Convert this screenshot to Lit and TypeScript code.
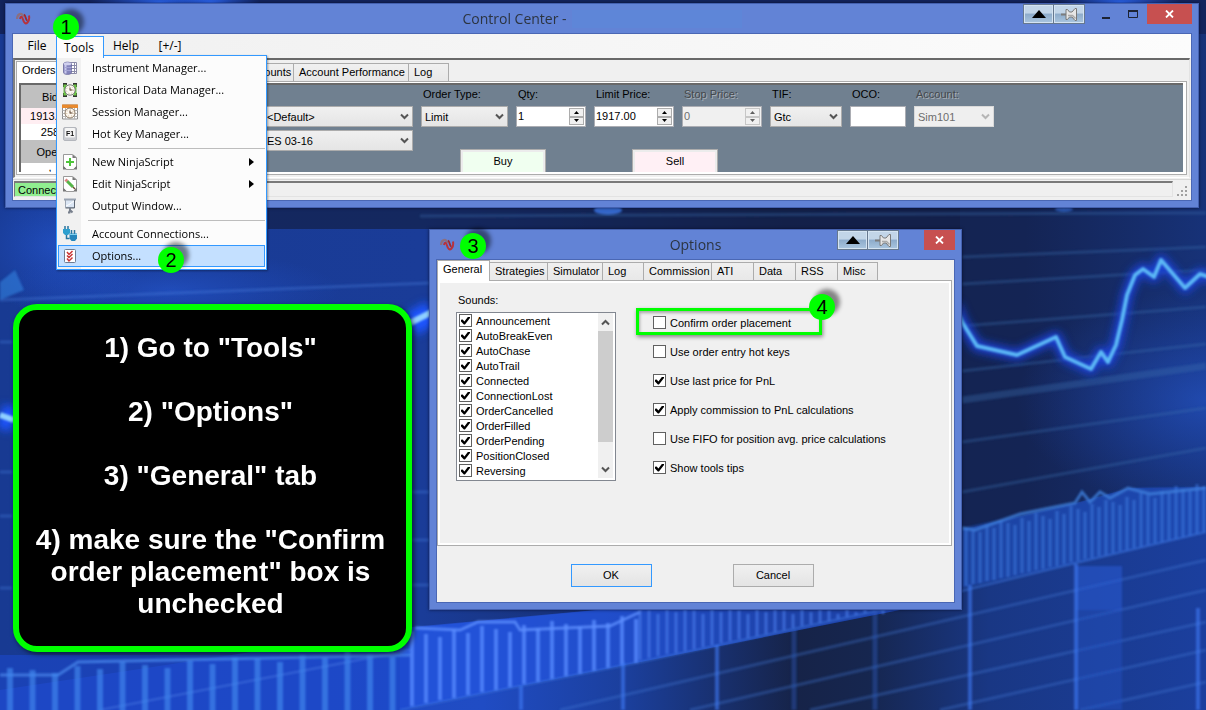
import { LitElement, html, svg, css, nothing } from "lit";
import { customElement, property } from "lit/decorators.js";
import { classMap } from "lit/directives/class-map.js";

const pinGlyph = svg`
  <path d="M1 8.5h6" stroke="#7c7c7c" stroke-width="2"/>
  <path d="M6 3.500h1.500l2 2.500h2.500l3-3.500h1.500v12H15l-3-3.500H9.500l-2 2.500H6z" fill="#e6e6e6" stroke="#7a7a7a" stroke-width="1"/>
  <path d="M8 9.500h4.500l3 3" stroke="#a9a9a9" stroke-width="1.500" fill="none"/>`;

/** Numbered green disc that points at a step of the walkthrough. */
@customElement("step-badge")
export class StepBadge extends LitElement {
  static styles = css`
    :host {
      position: absolute;
      z-index: 5;
      display: grid;
      place-items: center;
      width: 26px;
      height: 26px;
      border-radius: 50%;
      background: #00ff00;
      color: #000;
      font: 20px/26px "Liberation Sans", Arial, sans-serif;
      box-shadow: 5px -5px 4px rgba(0, 0, 0, 0.45);
    }
  `;
  render() {
    return html`<slot></slot>`;
  }
}

/** Window chrome: caption, caption buttons and a client area. */
@customElement("desktop-window")
export class DesktopWindow extends LitElement {
  @property() caption = "";
  @property({ type: Boolean }) resizable = false;
  @property({ type: Boolean }) redacted = false;

  static styles = css`
    :host {
      display: flex;
      flex-direction: column;
      box-sizing: border-box;
      border: 1px solid #4461b0;
      background: #6283d6;
      padding: 0 6px 6px;
      box-shadow: 0 0 3px rgba(0, 0, 20, 0.6);
    }
    .caption {
      display: grid;
      grid-template-columns: 1fr auto 1fr;
      height: 29px;
      align-items: start;
    }
    .logo {
      margin: 8px 0 0 4px;
    }
    .title {
      display: flex;
      margin: 0;
      font: 14px/30px "Open Sans", "Noto Sans", sans-serif;
      color: #2c3440;
      white-space: pre;
    }
    .blank {
      width: 170px;
      height: 18px;
      margin: 6px 0 0 5px;
      background: #5e86d8;
    }
    .controls {
      display: flex;
      justify-content: flex-end;
    }
    button {
      display: grid;
      place-items: center;
      padding: 0;
      border: 0;
      background: none;
      height: 20px;
      width: 27px;
      border-radius: 0;
    }
    .extra {
      width: 31px;
      box-sizing: border-box;
      border: 1px solid #66788f;
      box-shadow: inset 0 0 0 1px #d5e4f2;
      background: linear-gradient(#c2d5e8 0 45%, #8dabca 50%, #aac6e0);
    }
    .extra + .extra {
      border-left: 0;
    }
    .extra:nth-of-type(2) {
      margin-right: 8px;
    }
    .close {
      width: 31px;
      background: #c75050;
    }
    .wide {
      width: 45px;
    }
    .gap {
      width: 17px;
    }
    .client {
      flex: 1;
      display: flex;
      flex-direction: column;
      border: 1px solid #4a67b4;
      background: #f0f0f0;
      min-height: 0;
    }
  `;

  render() {
    return html`
      <header class="caption">
        <svg class="logo" width="16" height="13" viewBox="0 0 16 13" fill="none">
          <path d="M1 7C1.500 1 6 .5 7.500 5" stroke="#8b6f80" stroke-width="2.200" />
          <path d="M4 7c.5-3 2-3 3 .5s2.500 5 4.500 3 2-4 1.500-7" stroke="#b8323c" stroke-width="2" />
          <path d="M8 2.500c2 1 1.500 6 3.500 6" stroke="#a3262c" stroke-width="1.800" />
        </svg>
        <h1 class="title">${this.caption}${this.redacted ? html`<span class="blank"></span>` : nothing}</h1>
        <div class="controls">
          <button class="extra" aria-label="Roll up">
            <svg width="16" height="8" viewBox="0 0 16 8"><path d="M1 8 8 0l7 8z" fill="#000" /></svg>
          </button>
          <button class="extra" aria-label="Pin">
            <svg width="18" height="16" viewBox="0 0 18 16" fill="none">${pinGlyph}</svg>
          </button>
          ${this.resizable
            ? html`
                <button aria-label="Minimize">
                  <svg width="11" height="12" viewBox="0 0 11 12"><path d="M1 9h8v2H1z" fill="#1c2333" /></svg>
                </button>
                <button aria-label="Maximize">
                  <svg width="11" height="9" viewBox="0 0 11 9" fill="none">
                    <path d="M.5 1.500h9v6h-9z" stroke="#1c2333" /><path d="M0 1h10" stroke="#1c2333" stroke-width="2" />
                  </svg>
                </button>
              `
            : html`<span class="gap"></span>`}
          <button class=${classMap({ close: true, wide: this.resizable })} aria-label="Close">
            <svg width="9" height="8" viewBox="0 0 9 8"><path d="m1 0.500 7 7M8 .5l-7 7" stroke="#fff" stroke-width="1.800" /></svg>
          </button>
        </div>
      </header>
      <div class="client"><slot></slot></div>
    `;
  }
}

const icons: Record<string, unknown> = {
  instrument: svg`
    <path d="M8.500 2.500h6v11h-6z" fill="#fff" stroke="#8a8aa8"/>
    <path d="M8.500 5.500h6M8.500 8.500h6M8.500 11.500h6M12.500 2.500v11" stroke="#8a8aa8"/>
    <path d="M1.500 4c0-2.500 8-2.500 8 0v8.500c0 2.500-8 2.500-8 0z" fill="#8484bc" stroke="#6a6a9c" stroke-width=".8"/>
    <path d="M3.500 4v9.500" stroke="#c8c8ec" stroke-width="2"/>
    <path d="M2 7.500h7.500M2 10.500h7.500" stroke="#a4a4d4"/>
    <ellipse cx="5.500" cy="3.800" rx="3.800" ry="1.500" fill="#d0d0ee"/>`,
  historical: svg`
    <path d="M2 5V2h3M11 2h3v3M2 11v3h3M11 14h3v-3" fill="none" stroke="#333" stroke-width="2"/>
    <path d="M3 2.500v11M13 2.500v11" stroke="#6cc644" stroke-width="3"/>
    <circle cx="8" cy="8" r="5.200" fill="#fdfaf4" stroke="#777"/>
    <circle cx="8" cy="8" r="3.500" stroke="#c9b89c" stroke-dasharray="1 2"/>
    <path d="M8 8.500V5.500M8 8h2.500" stroke="#5a3e28"/>`,
  session: svg`
    <path d="M.5 1h15v14H.5z" fill="#fff" stroke="#8d8d8d"/>
    <path d="M.5 6.500h15M.5 9.500h15M.5 12.500h15M3.500 4v11M12.500 4v11" stroke="#b5b5b5"/>
    <path d="M0 .5h16V4H0z" fill="#e88a2e"/>
    <circle cx="8" cy="9" r="5" fill="#fdf8f0" stroke="#8a7762"/>
    <circle cx="8" cy="9" r="3.300" stroke="#d0b48c" stroke-dasharray="1 2"/>
    <path d="M8 9.500V6.500M8 9h2.500" stroke="#5a3e28"/>`,
  hotkey: svg`
    <rect x="1.500" y="1.500" width="13" height="13" rx="1.500" fill="#c9cbd0" stroke="#b3b6bc"/>
    <rect x="3" y="2" width="10" height="9.500" rx="1" fill="#f5f5f5"/>
    <text x="8" y="9.500" font-family="Liberation Sans, sans-serif" font-weight="700" font-size="7" text-anchor="middle" fill="#111">F1</text>`,
  create: svg`
    <path d="M1.500.5h9l4 3v9l-3 3h-7l-3-3z" fill="#fff" stroke="#9a9a9a"/>
    <path d="M1 15.500h4L1 11.500zM15 15.500h-4l4-4zM10.500.5l4 3.500h-4z" fill="#777"/>
    <path d="M8 4v8M4 8h8" stroke="#4ec53a" stroke-width="2"/>`,
  edit: svg`
    <path d="M1.500.5h9l4 3v9l-3 3h-7l-3-3z" fill="#fff" stroke="#9a9a9a"/>
    <path d="M1 15.500h4L1 11.500zM15 15.500h-4l4-4zM10.500.5l4 3.500h-4z" fill="#777"/>
    <path d="m5 5 6 6" stroke="#55b548" stroke-width="3"/>
    <path d="m3.500 3.500 1.700 1.700" stroke="#d98080" stroke-width="3"/>
    <path d="m11 11 2 2" stroke="#6b4a2a" stroke-width="1.500"/>`,
  output: svg`
    <path d="M3.500 1.500h9v8h-9z" fill="#dbe6f4" stroke="#9aa4b2"/>
    <path d="M2 1.500h12" stroke="#9aa4b2" stroke-width="2"/>
    <path d="M12.500 2v8h-9" stroke="#5f6875"/>
    <path d="M4 8c3-1 5-3 8-5" stroke="#fff"/>
    <path d="M8 10v2M6 14.500h1.500L8 12l2.500 2.500" stroke="#777f8c" stroke-width="2"/>`,
  connections: svg`
    <path d="M3 0v4M6 0v4" stroke="#2876a0" stroke-width="1.500"/>
    <path d="M1 3h7v4L6 9H3L1 7z" fill="#2d9fce"/><path d="M4.500 9v3.500h3" stroke="#2876a0" stroke-width="1.500" fill="none"/>
    <path d="M9.500 4v4M12.500 4v4" stroke="#2876a0" stroke-width="1.500"/>
    <path d="M7.500 7.500H15v5l-2 2.500H9.500l-2-2.500z" fill="#2585bb"/><path d="M8 8.500h7" stroke="#7fd0ee"/>`,
  options: svg`
    <rect x="2.500" y="1.500" width="11" height="13" rx="1" fill="#fff" stroke="#6d7c92"/>
    <path d="m5 4 2 2.500L10.500 3M5 10.500 7 13l3.500-3.500M5 7.500 7 9.500 10.500 6" stroke="#c93636" stroke-width="1.500" fill="none"/>`,
};

type MenuEntry = { icon: string; label: string; sub?: boolean; active?: boolean } | null;

const toolsMenu: MenuEntry[] = [
  { icon: "instrument", label: "Instrument Manager..." },
  { icon: "historical", label: "Historical Data Manager..." },
  { icon: "session", label: "Session Manager..." },
  { icon: "hotkey", label: "Hot Key Manager..." },
  null,
  { icon: "create", label: "New NinjaScript", sub: true },
  { icon: "edit", label: "Edit NinjaScript", sub: true },
  { icon: "output", label: "Output Window..." },
  null,
  { icon: "connections", label: "Account Connections..." },
  { icon: "options", label: "Options...", active: true },
];

const sounds = [
  "Announcement", "AutoBreakEven", "AutoChase", "AutoTrail", "Connected", "ConnectionLost",
  "OrderCancelled", "OrderFilled", "OrderPending", "PositionClosed", "Reversing",
];

const settings: [string, boolean][] = [
  ["Confirm order placement", false],
  ["Use order entry hot keys", false],
  ["Use last price for PnL", true],
  ["Apply commission to PnL calculations", true],
  ["Use FIFO for position avg. price calculations", false],
  ["Show tools tips", true],
];

const optionTabs: [string, number][] = [
  ["General", 53], ["Strategies", 58], ["Simulator", 55], ["Log", 41], ["Commission", 68],
  ["ATI", 42], ["Data", 42], ["RSS", 42], ["Misc", 40],
];

const instructions = [
  '1) Go to "Tools"',
  '2) "Options"',
  '3) "General" tab',
  '4) make sure the "Confirm order placement" box is unchecked',
];

/** Vertical bars of the wallpaper chart, between an upper and a lower edge. */
function bars(x0: number, x1: number, step: number, top: (x: number) => number, bottom: (x: number) => number) {
  let d = "";
  for (let x = x0, i = 0; x < x1; x += step, i++) {
    d += `M${x} ${Math.round(top(x) + ((i * 7) % 5) * 2)}V${Math.round(bottom(x))}`;
  }
  return d;
}

const ray = (x0: number, y0: number, x1: number, y1: number) => (x: number) =>
  y0 + ((x - x0) * (y1 - y0)) / (x1 - x0);

const priceLine =
  "M955 305 962 322 977 346 1017 355 1056 337 1065 357 1091 369 1101 352 1108 362 1116 345 1122 320 1127 295 1135 275 1143 269 1154 277 1161 260 1185 288 1200 274 1212 278";

const wallpaper = html`
  <svg class="wallpaper" viewBox="0 0 1206 710" preserveAspectRatio="xMidYMid slice" aria-hidden="true">
    <defs>
      <linearGradient id="base" x1="0" x2="1">
        <stop offset="0" stop-color="#183a92" />
        <stop offset=".35" stop-color="#1a3c98" />
        <stop offset=".65" stop-color="#14244f" />
        <stop offset=".85" stop-color="#142454" />
        <stop offset="1" stop-color="#173278" />
      </linearGradient>
      <linearGradient id="floor" x1="0" x2="1">
        <stop offset="0" stop-color="#1f46ba" />
        <stop offset=".4" stop-color="#204cc4" />
        <stop offset=".52" stop-color="#1b3f9c" />
        <stop offset=".66" stop-color="#162348" />
        <stop offset=".72" stop-color="#16264f" />
        <stop offset=".82" stop-color="#193784" />
        <stop offset="1" stop-color="#1b3f9e" />
      </linearGradient>
      <radialGradient id="spot">
        <stop offset="0" stop-color="#2c66f0" />
        <stop offset="1" stop-color="#2458e0" stop-opacity="0" />
      </radialGradient>
      <filter id="soft" x="-10%" y="-10%" width="120%" height="120%"><feGaussianBlur stdDeviation="1.2" /></filter>
      <filter id="glow" x="-20%" y="-50%" width="140%" height="200%"><feGaussianBlur stdDeviation="4" /></filter>
    </defs>
    <rect width="1206" height="710" fill="url(#base)" />
    <rect width="1206" height="34" fill="#13245c" />
    <ellipse cx="160" cy="2" rx="70" ry="9" fill="url(#spot)" />
    <ellipse cx="210" cy="2" rx="50" ry="9" fill="url(#spot)" />
    <ellipse cx="1120" cy="2" rx="60" ry="9" fill="url(#spot)" />
    <ellipse cx="1206" cy="400" rx="190" ry="110" fill="url(#spot)" opacity=".45" />
    <ellipse cx="60" cy="245" rx="90" ry="70" fill="url(#spot)" opacity=".45" />
    <ellipse cx="170" cy="290" rx="170" ry="40" fill="url(#spot)" opacity=".4" />
    <path d="M268 208H960V229H268z" fill="#121f47" opacity=".7" />
    <ellipse cx="608" cy="210" rx="14" ry="5" fill="#3d78e8" filter="url(#soft)" opacity=".8" />
    <ellipse cx="1064" cy="209" rx="9" ry="3" fill="#3d78e8" filter="url(#soft)" opacity=".6" />
    <path d="M0 690 120 672 410 628 640 606 970 528 1080 502 1130 488 1206 487V710H0z" fill="url(#floor)" />
    <path d="M400 628 640 606 900 560V610L400 710z" fill="#2456e6" opacity=".6" />
    <path d="M0 655H410V710H0z" fill="#1d48cc" opacity=".6" />
    <g filter="url(#soft)" fill="none">
      <path d="M962 257 1206 247M962 284 1206 270M962 326 1206 307M962 371 1206 344M962 442 1206 408" stroke="#3a6fae" stroke-width="3" opacity=".35" />
      <path d="M962 400 1206 366" stroke="#3a6fae" stroke-width="7" opacity=".35" />
      <path d="M962 492 1206 448M420 216 1206 213" stroke="#3a6fae" stroke-width="3" opacity=".35" />
      <path d="M560 710 1206 560M690 710 1206 590M810 710 1206 622M940 710 1206 650M1080 710 1206 682" stroke="#4379d8" stroke-width="3" opacity=".35" />
      <path d="M0 300 430 283M0 342H12M0 472H12M0 516H12M412 492H430M412 540H430M412 585H430M0 588H12" stroke="#4a7ee0" stroke-width="3" opacity=".35" />
      <path d="M0 282 15 270 24 290 0 300z" fill="#3482e0" opacity=".6" />
      <path d="M0 675H58L78 662 410 655" stroke="#4b8cf0" stroke-width="3" opacity=".7" />
      <path d="M100 710 410 650" stroke="#5a8df0" stroke-width="2" opacity=".4" />
      <path d=${bars(10, 410, 22.500, ray(0, 668, 410, 648), () => 714)} stroke="#4088ee" stroke-width="6" opacity=".65" />
      <path d=${bars(412, 640, 14, ray(400, 632, 640, 615), ray(400, 708, 640, 662))} stroke="#5a8cff" stroke-width="4" opacity=".75" />
      <path d=${bars(640, 900, 9, () => 606, ray(640, 660, 900, 606))} stroke="#4d80f0" stroke-width="3" opacity=".6" />
      <path d="M415 628 460 630 478 622 515 622 520 630 610 626 640 612" stroke="#5f90ff" stroke-width="3" opacity=".8" />
      <path d="M962 528 1080 502 1130 488 1206 487V532L1080 562 962 588z" fill="#1d50c0" opacity=".55" />
      <path d=${bars(966, 1206, 7, ray(966, 527, 1206, 480), ray(966, 586, 1206, 532))} stroke="#3f7eea" stroke-width="3" opacity=".5" />
      <path d="M962 528 975 530 1020 514 1075 503 1082 492 1090 502 1100 492 1110 498 1128 488 1150 494 1206 488" stroke="#4080dc" stroke-width="3" opacity=".8" />
      <path d="M400 710 640 662 900 606 1080 562 1206 532" stroke="#3c74e0" stroke-width="2" opacity=".6" />
      <path d="M1076 566h46v44h-46z" fill="#2a5cdc" opacity=".5" />
      <path d="M1076 610h46v100h-46z" fill="#2453c8" opacity=".4" />
      <path d="M521 686V710M623 662V710M717 645V710M970 585V710M1076 564V710M1198 608V710" stroke="#3f7bf5" stroke-width="4" opacity=".6" />
      <path d="M794 628V710M875 612V710" stroke="#2e5cc0" stroke-width="5" opacity=".4" />
    </g>
    <path d=${priceLine} fill="none" stroke="#1a42d8" stroke-width="11" stroke-linejoin="round" filter="url(#glow)" />
    <path d=${priceLine} fill="none" stroke="#5cb8f6" stroke-width="4" stroke-linejoin="round" filter="url(#soft)" />
    <path d="M0 416 14 420M410 325 432 312" stroke="#1c55ff" stroke-width="24" filter="url(#glow)" />
    <path d="M0 415 14 420M410 323 432 312" stroke="#8fd0ff" stroke-width="6" filter="url(#soft)" />
  </svg>
`;

@customElement("app-root")
export class AppRoot extends LitElement {
  static styles = css`
    :host {
      display: block;
      position: relative;
      height: 100vh;
      overflow: hidden;
      background: #16295f;
      color: #000;
      font: 11px/14px "Liberation Sans", Arial, sans-serif;
    }
    button,
    input,
    select {
      box-sizing: border-box;
      font: inherit;
      color: inherit;
      margin: 0;
      border-radius: 0;
    }
    .wallpaper {
      position: absolute;
      inset: 0;
      width: 100%;
      height: 100%;
    }

    /* control center */
    .center {
      position: absolute;
      left: 5px;
      right: 7px;
      top: 3px;
    }
    .menubar {
      display: flex;
      height: 24px;
      background: linear-gradient(90deg, #f0f0f0, #fcfcfc);
      font: 12px/22px "Open Sans", "Noto Sans", sans-serif;
      padding-left: 5px;
    }
    .menubar button {
      display: block;
      width: 44px;
      height: 24px;
      padding: 0;
      border: 1px solid transparent;
      background: none;
    }
    .menubar .file {
      width: 38px;
    }
    .menu-host {
      position: relative;
    }
    .menu-host .open {
      width: 48px;
      height: 22px;
      margin-top: 2px;
      padding-right: 2px;
      line-height: 18px;
      border: 1px solid #3399ff;
      border-bottom: 0;
      background: #fcfcfc;
      position: relative;
      z-index: 3;
    }
    .menu {
      position: absolute;
      z-index: 2;
      top: 21px;
      left: 0;
      box-sizing: border-box;
      width: 211px;
      margin: 0;
      padding: 1px 1px 2px;
      border: 1px solid #3399ff;
      list-style: none;
      background: linear-gradient(90deg, #f1f1f1 24px, #fcfcfc 24px);
      box-shadow: 1px 1px 2px rgba(0, 0, 0, 0.35);
      font-size: 11px;
      line-height: 20px;
    }
    .menu button {
      display: grid;
      grid-template-columns: 16px 1fr 8px;
      column-gap: 14px;
      align-items: center;
      width: 100%;
      height: 22px;
      padding: 0 7px 0 3px;
      text-align: left;
      white-space: nowrap;
    }
    .menu .active {
      border-color: #3399ff;
      background: #c4e0ff;
    }
    .menu .divider {
      height: 3px;
      padding: 3px 0 0 30px;
    }
    .menu hr {
      margin: 0;
      border: 0;
      border-top: 1px solid #bdbdbd;
    }
    .workspace {
      margin-right: 1px;
      padding: 1px 2px 2px 1px;
      border: 1px solid #a0a0a0;
      border-width: 2px 1px 1px 2px;
      border-color: #696969 #e3e3e3 #fff #808080;
    }
    .tabs {
      display: flex;
      align-items: flex-end;
      height: 20px;
      position: relative;
    }
    .tabs button {
      height: 18px;
      padding: 0 0 1px 5px;
      border: 1px solid #acacac;
      border-left-width: 0;
      border-bottom: 0;
      background: linear-gradient(#f0f0f0, #e8e8e8);
      text-align: left;
      white-space: nowrap;
    }
    .tabs .current {
      height: 21px;
      margin-bottom: -1px;
      padding-bottom: 4px;
      background: #fff;
      border-left-width: 1px;
    }
    .tab-orders {
      width: 48px;
    }
    .tabs .tab-accounts {
      width: 54px;
      margin-left: 176px;
      border-left-width: 1px;
    }
    .tab-performance {
      width: 115px;
    }
    .tab-log {
      width: 40px;
    }
    .page {
      padding: 1px 3px 2px 2px;
      background: #fff;
      border: 1px solid #acacac;
    }
    .entry {
      display: flex;
      height: 87px;
      overflow: hidden;
      background: #708090;
      border: 1px solid #696969;
      border-width: 2px 0 0 2px;
    }
    table {
      border-collapse: collapse;
      width: 58px;
      background: #fff;
      text-align: center;
      align-self: flex-start;
    }
    th,
    td {
      padding: 0;
      font-weight: 400;
      height: 16px;
    }
    th {
      height: 23px;
      background: #c0c0c0;
    }
    .clip {
      height: 9px;
      line-height: 9px;
    }
    .bid {
      background: #ffeef2;
    }
    .strategy {
      display: grid;
      align-content: start;
      gap: 3px;
      width: 149px;
      padding: 21px 8px 0 185px;
    }
    .strategy select {
      padding-left: 2px;
    }
    .ticket {
      display: flex;
      flex-direction: column;
    }
    .fields {
      display: grid;
      grid-template-columns: 87px 70px 80px 80px 72px 56px 80px;
      column-gap: 8px;
      padding-top: 2px;
    }
    .field {
      display: grid;
      gap: 5px;
    }
    .field label {
      padding-left: 2px;
      color: #000;
    }
    .field .off {
      color: #45484c;
      text-shadow: 1px 1px 0 #a9b0b8;
    }
    .combo {
      display: grid;
      align-items: center;
    }
    .combo > * {
      grid-area: 1 / 1;
    }
    .combo svg {
      justify-self: end;
      margin-right: 4px;
      pointer-events: none;
    }
    select {
      appearance: none;
      width: 100%;
      height: 21px;
      padding: 0 16px 0 3px;
      border: 1px solid #acacac;
      background: linear-gradient(#f0f0f0, #e5e5e5);
    }
    select:disabled {
      color: #6d6d6d;
      background: #efefef;
      border-color: #d9d9d9;
      opacity: 1;
    }
    .spin {
      display: grid;
      grid-template-columns: 1fr 15px;
      box-sizing: border-box;
      height: 21px;
      padding: 1px;
      border: 1px solid #abadb3;
      background: #fff;
    }
    .spin input {
      min-width: 0;
      padding: 0 0 2px;
      border: 0;
      background: none;
    }
    .spin.off {
      background: #f0f0f0;
      color: #6d6d6d;
    }
    .arrows {
      display: grid;
    }
    .arrows button {
      display: grid;
      place-items: center;
      padding: 0;
      border: 1px solid #acacac;
      background: #f0f0f0;
      overflow: hidden;
      min-height: 0;
    }
    .off .arrows {
      opacity: 0.6;
    }
    .oco {
      width: 100%;
      height: 21px;
      border: 1px solid #abadb3;
      background: #fff;
    }
    .trade {
      display: flex;
      gap: 86px;
      padding: 22px 0 0 39px;
    }
    .trade button {
      flex: none;
      width: 86px;
      height: 26px;
      padding: 0 0 2px;
      border: 1px solid #acacac;
      box-shadow: inset 0 0 0 2px #ececec;
    }
    .buy {
      background: #f0fff0;
    }
    .sell {
      background: #fff0f5;
    }
    .status {
      display: flex;
      align-items: flex-end;
      justify-content: space-between;
      height: 21px;
      margin-top: 1px;
      padding: 0 3px 3px 1px;
      box-sizing: border-box;
      border-top: 1px solid #d7d7d7;
    }
    .status output {
      flex: 1;
      margin-right: 3px;
      border: 1px solid #e3e3e3;
      border-top: 2px solid #7a7a7a;
      border-left-color: #7a7a7a;
      background: linear-gradient(90deg, #90ee90 60px, #f0f0f0 60px);
      padding-left: 3px;
      height: 13px;
    }

    /* options dialog */
    .options {
      position: absolute;
      left: 429px;
      top: 229px;
      width: 533px;
      height: 381px;
    }
    .sheet {
      display: flex;
      height: 266px;
      margin-right: 2px;
      box-sizing: border-box;
      border: 1px solid #acacac;
      box-shadow: inset 1px 1px 0 1px #fff, inset -1px -1px 0 1px #fff;
      padding: 12px 18px;
      gap: 37px;
    }
    .sheet h2 {
      margin: 0 0 5px 2px;
      font: inherit;
    }
    .list {
      display: flex;
      justify-content: space-between;
      box-sizing: border-box;
      width: 160px;
      padding: 0 2px 2px;
      border: 1px solid #828790;
      background: #fff;
    }
    .list ul {
      margin: 0;
      padding: 0;
      list-style: none;
    }
    .check {
      display: flex;
      align-items: center;
      gap: 4px;
      height: 15px;
      white-space: nowrap;
    }
    input[type="checkbox"] {
      appearance: none;
      flex: none;
      display: grid;
      place-items: center;
      width: 13px;
      height: 13px;
      border: 1px solid #606060;
      background: #fff;
    }
    input:checked::before {
      content: "";
      width: 9px;
      height: 8px;
      background: #000;
      clip-path: polygon(0 42%, 18% 38%, 38% 62%, 80% 0, 100% 0, 100% 20%, 44% 100%, 32% 100%, 0 64%);
    }
    .scroll {
      display: grid;
      grid-template-rows: 18px 111px 1fr;
      width: 15px;
      background: #f0f0f0;
      justify-items: center;
    }
    .thumb {
      width: 100%;
      background: #cdcdcd;
    }
    .scroll svg {
      align-self: center;
    }
    .scroll svg:last-child {
      align-self: end;
      margin-bottom: 5px;
    }
    .settings {
      display: grid;
      align-content: start;
      gap: 14px;
      padding-top: 22px;
      position: relative;
    }
    .ring {
      position: absolute;
      left: -17px;
      top: 15px;
      width: 180px;
      height: 21px;
      border: 3px solid #00ff00;
      box-shadow: 1px 2px 4px rgba(0, 0, 0, 0.45), inset 1px 2px 3px rgba(0, 0, 0, 0.3);
      pointer-events: none;
    }
    .actions {
      display: flex;
      justify-content: center;
      gap: 81px;
      padding: 18px 7px 0 0;
    }
    .actions button {
      width: 81px;
      height: 23px;
      padding: 0 0 2px;
      border: 1px solid #acacac;
      background: linear-gradient(#f0f0f0, #e4e4e4);
    }
    .actions .default {
      border-color: #3399ff;
    }

    /* step badges */
    .one { left: 53px; top: 14px; }
    .two { left: 158px; top: 247px; }
    .three { left: 460px; top: 233px; }
    .four { left: 809px; top: 294px; }

    /* walkthrough note */
    .note {
      position: absolute;
      left: 13px;
      top: 304px;
      box-sizing: border-box;
      width: 399px;
      padding: 22px 14px 26px 10px;
      display: grid;
      gap: 32px;
      border: 6px solid #00ff00;
      border-radius: 24px;
      background: #000;
      color: #fff;
      font: 700 28px/32px "Liberation Sans", Arial, sans-serif;
      text-align: center;
      box-shadow: 2px 2px 5px rgba(0, 0, 0, 0.6);
    }
    .note p {
      margin: 0;
    }
  `;

  private chevron(color = "#555") {
    return html`<svg width="9" height="7" viewBox="0 0 9 7" fill="none">
      <path d="m1 1.500 3.500 3.500L8 1.500" stroke=${color} stroke-width="2" />
    </svg>`;
  }

  private combo(id: string, value: string, disabled = false, name = "") {
    return html`<div class="combo">
      <select id=${id} ?disabled=${disabled} aria-label=${name || nothing}>
        <option>${value}</option>
      </select>
      ${this.chevron(disabled ? "#b5b5b5" : "#555")}
    </div>`;
  }

  private spin(id: string, value: string, disabled = false) {
    const arrow = (label: string, d: string) => html`<button ?disabled=${disabled} aria-label=${label}>
      <svg width="5" height="3" viewBox="0 0 5 3"><path d=${d} fill="#000" /></svg>
    </button>`;
    return html`<div class=${classMap({ spin: true, off: disabled })}>
      <input id=${id} .value=${value} ?disabled=${disabled} />
      <div class="arrows">${arrow("Increase", "M0 3 2.500 0 5 3z")}${arrow("Decrease", "M0 0h5L2.500 3z")}</div>
    </div>`;
  }

  private field(id: string, label: string, control: unknown, disabled = false) {
    return html`<div class="field">
      <label for=${id} class=${classMap({ off: disabled })}>${label}</label>${control}
    </div>`;
  }

  private check(label: string, checked: boolean) {
    return html`<label class="check"><input type="checkbox" .checked=${checked} />${label}</label>`;
  }

  private menuEntry(entry: MenuEntry) {
    if (!entry) return html`<li class="divider"><hr /></li>`;
    return html`<li>
      <button class=${classMap({ active: !!entry.active })}>
        <svg width="16" height="16" viewBox="0 0 16 16" fill="none">${icons[entry.icon]}</svg>
        <span>${entry.label}</span>
        ${entry.sub ? html`<svg width="5" height="8" viewBox="0 0 5 8"><path d="M0 0l5 4-5 4z" fill="#000" /></svg>` : nothing}
      </button>
    </li>`;
  }

  private controlCenter() {
    return html`<desktop-window class="center" caption="Control Center -" resizable redacted>
      <nav class="menubar">
        <button class="file">File</button>
        <div class="menu-host">
          <button class="open">Tools</button>
          <ul class="menu">${toolsMenu.map((e) => this.menuEntry(e))}</ul>
        </div>
        <button>Help</button>
        <button>[+/-]</button>
      </nav>
      <section class="workspace">
        <div class="tabs" role="tablist">
          <button role="tab" class="current tab-orders">Orders</button>
          <button role="tab" class="tab-accounts">Accounts</button>
          <button role="tab" class="tab-performance">Account Performance</button>
          <button role="tab" class="tab-log">Log</button>
        </div>
        <div class="page">
          <div class="entry">
            <table>
              <tr><th>Bid</th></tr>
              <tr><td class="bid">1913.75</td></tr>
              <tr><td>258</td></tr>
              <tr><th>Open</th></tr>
              <tr><td class="clip">,</td></tr>
            </table>
            <div class="strategy">
              ${this.combo("atm", "<Default>", false, "Strategy")} ${this.combo("instrument", "ES 03-16", false, "Instrument")}
            </div>
            <div class="ticket">
              <div class="fields">
                ${this.field("type", "Order Type:", this.combo("type", "Limit"))}
                ${this.field("qty", "Qty:", this.spin("qty", "1"))}
                ${this.field("limit", "Limit Price:", this.spin("limit", "1917.00"))}
                ${this.field("stop", "Stop Price:", this.spin("stop", "0", true), true)}
                ${this.field("tif", "TIF:", this.combo("tif", "Gtc"))}
                ${this.field("oco", "OCO:", html`<input id="oco" class="oco" />`)}
                ${this.field("account", "Account:", this.combo("account", "Sim101", true), true)}
              </div>
              <div class="trade">
                <button class="buy">Buy</button>
                <button class="sell">Sell</button>
              </div>
            </div>
          </div>
        </div>
      </section>
      <footer class="status">
        <output>Connected</output>
        <svg width="12" height="12" viewBox="0 0 12 12" fill="#a0a0a0">
          <path d="M9 1h2v2H9zM5 5h2v2H5zM9 5h2v2H9zM1 9h2v2H1zM5 9h2v2H5zM9 9h2v2H9z" />
        </svg>
      </footer>
    </desktop-window>`;
  }

  private optionsDialog() {
    return html`<desktop-window class="options" caption="Options">
      <div class="tabs" role="tablist">
        ${optionTabs.map(
          ([name, width], i) =>
            html`<button role="tab" class=${classMap({ current: i === 0 })} style="width:${width}px">${name}</button>`,
        )}
      </div>
      <section class="sheet">
        <div>
          <h2>Sounds:</h2>
          <div class="list">
            <ul>${sounds.map((name) => html`<li>${this.check(name, true)}</li>`)}</ul>
            <div class="scroll">
              <svg width="9" height="7" viewBox="0 0 9 7" fill="none"><path d="M1 5.500 4.500 2 8 5.500" stroke="#555" stroke-width="2" /></svg>
              <div class="thumb"></div>
              ${this.chevron()}
            </div>
          </div>
        </div>
        <div class="settings">
          <div class="ring"></div>
          ${settings.map(([label, on]) => this.check(label, on))}
        </div>
      </section>
      <div class="actions">
        <button class="default">OK</button>
        <button>Cancel</button>
      </div>
    </desktop-window>`;
  }

  render() {
    return html`
      ${wallpaper} ${this.optionsDialog()} ${this.controlCenter()}
      <aside class="note">${instructions.map((line) => html`<p>${line}</p>`)}</aside>
      <step-badge class="one">1</step-badge>
      <step-badge class="two">2</step-badge>
      <step-badge class="three">3</step-badge>
      <step-badge class="four">4</step-badge>
    `;
  }
}
